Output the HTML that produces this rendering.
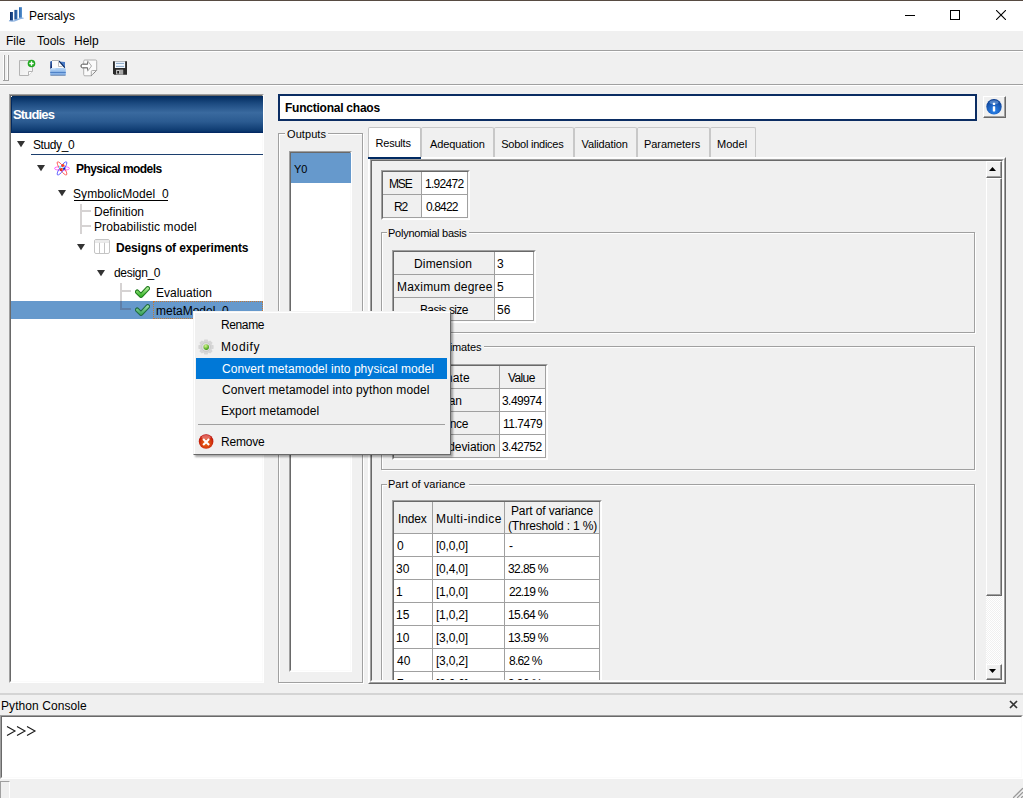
<!DOCTYPE html>
<html><head><meta charset="utf-8">
<style>
*{margin:0;padding:0;box-sizing:border-box}
html,body{width:1023px;height:798px;overflow:hidden;background:#f0f0f0}
body{position:relative;font:12px/14px "Liberation Sans",sans-serif;color:#000}
.a{position:absolute}
.t{position:absolute;white-space:nowrap;line-height:14px;font-family:"Liberation Sans",sans-serif}
</style></head><body>
<div class="a" style="left:0px;top:0px;width:1023px;height:1px;background:#574b42"></div>
<div class="a" style="left:0px;top:1px;width:1023px;height:30px;background:#fff"></div>
<svg class="a" style="left:8px;top:7px" width="16" height="16" viewBox="0 0 16 16"><defs><linearGradient id="b1" x1="0" y1="0" x2="1" y2="0"><stop offset="0" stop-color="#0a2a66"/><stop offset="1" stop-color="#2a5a9a"/></linearGradient>
 <linearGradient id="b2" x1="0" y1="0" x2="1" y2="0"><stop offset="0" stop-color="#1a4a8e"/><stop offset="1" stop-color="#3a72b4"/></linearGradient>
 <linearGradient id="b3" x1="0" y1="0" x2="1" y2="0"><stop offset="0" stop-color="#2a66ac"/><stop offset="1" stop-color="#5a94d0"/></linearGradient></defs>
 <rect x="2" y="5" width="3" height="8.7" fill="url(#b1)"/><rect x="6.4" y="2.9" width="3" height="9.7" fill="url(#b2)"/><rect x="11" y="0.2" width="3" height="10.6" fill="url(#b3)"/>
 <path d="M1 13.6Q5 14.8 9 12.8T15.5 11.3" fill="none" stroke="#7aa6dc" stroke-width="1.3" opacity="0.85"/></svg>
<div class="t" style="left:29.00px;top:9px;font-size:12px">Persalys</div>
<div class="a" style="left:905px;top:15px;width:10px;height:1px;background:#000"></div>
<div class="a" style="left:950px;top:10px;width:10px;height:10px;border:1px solid #000"></div>
<svg class="a" style="left:996px;top:10px" width="10" height="10" viewBox="0 0 10 10"><path d="M0 0L10 10M10 0L0 10" stroke="#000" stroke-width="1.1"/></svg>
<div class="t" style="left:6.00px;top:34px;font-size:12px">File</div>
<div class="t" style="left:37.00px;top:34px;font-size:12px">Tools</div>
<div class="t" style="left:74.00px;top:34px;font-size:12px">Help</div>
<div class="a" style="left:0px;top:50px;width:1023px;height:1px;background:#a0a0a0"></div>
<div class="a" style="left:0px;top:51px;width:1023px;height:1px;background:#fff"></div>
<div class="a" style="left:3px;top:55px;width:1px;height:26px;background:#fff"></div>
<div class="a" style="left:4px;top:55px;width:1px;height:26px;background:#a0a0a0"></div>
<div class="a" style="left:7px;top:55px;width:1px;height:26px;background:#fff"></div>
<div class="a" style="left:8px;top:55px;width:1px;height:26px;background:#a0a0a0"></div>
<div class="a" style="left:3px;top:80px;width:6px;height:1px;background:#a0a0a0"></div>
<svg class="a" style="left:18px;top:59px" width="18" height="18" viewBox="0 0 18 18"><defs><linearGradient id="pg" x1="0" y1="0" x2="1" y2="1"><stop offset="0" stop-color="#e8e8e8"/><stop offset="1" stop-color="#fafafa"/></linearGradient></defs>
 <path d="M1.5 1.5H14.5V12.5L10.5 16.5H1.5Z" fill="url(#pg)" stroke="#b4b4b4"/>
 <path d="M10.5 16.5V12.5H14.5" fill="#fff" stroke="#b4b4b4"/>
 <circle cx="13.5" cy="4.5" r="3.8" fill="#1fa81f"/>
 <path d="M13.5 2.3V6.7M11.3 4.5H15.7" stroke="#fff" stroke-width="1.4"/></svg>
<svg class="a" style="left:50px;top:60px" width="16" height="16" viewBox="0 0 16 16"><defs><linearGradient id="tray" x1="0" y1="0" x2="0" y2="1"><stop offset="0" stop-color="#b4d4f6"/><stop offset="1" stop-color="#7aa8e2"/></linearGradient>
 <linearGradient id="back" x1="0" y1="0" x2="0" y2="1"><stop offset="0" stop-color="#3a6cb8"/><stop offset="1" stop-color="#0a2060"/></linearGradient></defs>
 <path d="M0.2 2.2Q0.2 1 1.4 1H2.2V9H0.2Z" fill="url(#back)"/>
 <path d="M2 0.5H8.8L15 7V9H2Z" fill="#fcfcfc"/>
 <path d="M2 0.5H8.8" stroke="#a8a8a8" stroke-width="0.9"/>
 <path d="M9 1.4L15 2V8.2Z" fill="#4a7cc8"/>
 <path d="M8.9 0.9L14.8 7.6" stroke="#0a2a60" stroke-width="1.1"/>
 <path d="M8.5 2V6.5H12.5" fill="none" stroke="#b8b8b8" stroke-width="0.9"/>
 <rect x="0.2" y="8" width="15.6" height="7.6" rx="1.2" fill="url(#tray)"/>
 <path d="M0.5 15.3H15.5" stroke="#6a84a8" stroke-width="0.8"/>
 <path d="M0.2 12.4H15.8" stroke="#3f74c0" stroke-width="0.9"/>
 <path d="M1.5 8.8H5.5" stroke="#d8ecff" stroke-width="0.9"/></svg>
<svg class="a" style="left:80px;top:59px" width="18" height="18" viewBox="0 0 18 18"><path d="M3.7 2.2Q3.7 1 4.9 1H15.5Q16.7 1 16.7 2.2V11.3L11.3 16.8H4.9Q3.7 16.8 3.7 15.6Z" fill="#fbfbfb" stroke="#a8a8a8" stroke-width="0.9"/>
 <path d="M11.3 16.8V12.5Q11.3 11.5 12.3 11.5H16.7" fill="#f4f4f4" stroke="#a0a0a0" stroke-width="0.9"/>
 <path d="M11.6 16.4L16.4 11.6" stroke="#505050" stroke-width="0.9" stroke-dasharray="1 0.8"/>
 <path d="M2.5 5.2H7.6V1.8L11.5 7L7.6 12.2V8.8H2.5Q1 8.8 1 7Q1 5.2 2.5 5.2Z" fill="#fff" stroke="#a0a0a0" stroke-width="0.9"/>
 <path d="M2.5 5.2H7.6V3.2M7.6 10.8V8.8H2.5Q1 8.8 1 7Q1 5.2 2.5 5.2" fill="none" stroke="#707070" stroke-width="1"/></svg>
<svg class="a" style="left:112px;top:60px" width="16" height="16" viewBox="0 0 16 16"><path d="M1 1.2H15V14.8H2.2L1 13.6Z" fill="#2a2a2a"/>
 <rect x="2.9" y="1.4" width="10.2" height="6.6" fill="#f2f8ff"/>
 <path d="M4 3.4H12.1M4 6.4H12.1" stroke="#7a9cc0" stroke-width="0.9"/>
 <rect x="4.1" y="9.8" width="7" height="4.6" fill="#c8c8c8"/>
 <rect x="7.6" y="9.8" width="3.5" height="4.6" fill="#a8a8a8"/>
 <rect x="5.2" y="11" width="1.8" height="2.6" fill="#202020"/></svg>
<div class="a" style="left:0px;top:84px;width:1023px;height:1px;background:#a0a0a0"></div>
<div class="a" style="left:0px;top:85px;width:1023px;height:1px;background:#fff"></div>
<div class="a" style="left:9px;top:94px;width:255px;height:589px;background:#fff;border-top:1px solid #a0a0a0;border-left:1px solid #a0a0a0;border-right:1px solid #fff;border-bottom:1px solid #fff"></div>
<div class="a" style="left:10px;top:95px;width:253px;height:587px;border-top:1px solid #696969;border-left:1px solid #696969;border-right:1px solid #fbfbfb;border-bottom:1px solid #fbfbfb"></div>
<div class="a" style="left:11px;top:96px;width:252px;height:37px;background:linear-gradient(#002a5e 0%,#1c4a80 20%,#3a6a9f 45%,#2a5a90 70%,#0d3a70 94%,#002560 100%)"></div>
<div class="a" style="left:11px;top:96px;width:1px;height:37px;background:#002a62"></div>
<div class="a" style="left:11px;top:96px;width:1px;height:1px;background:#fff"></div>
<div class="t" style="left:13.00px;top:108px;font-size:13px;font-weight:700;letter-spacing:-0.83px;color:#fff">Studies</div>
<svg class="a" style="left:17px;top:141px" width="8" height="7" viewBox="0 0 8 7"><path d="M0 0H8L4 6.2Z" fill="#333"/></svg>
<div class="t" style="left:33.00px;top:138px;font-size:12px;letter-spacing:-0.40px">Study_0</div>
<div class="a" style="left:31px;top:154px;width:232px;height:1px;background:#1c3f6e"></div>
<svg class="a" style="left:37px;top:165px" width="8" height="7" viewBox="0 0 8 7"><path d="M0 0H8L4 6.2Z" fill="#333"/></svg>
<svg class="a" style="left:54px;top:160px" width="16" height="17" viewBox="0 0 16 17"><g fill="none" stroke-width="0.9">
 <ellipse cx="8" cy="8.4" rx="7.6" ry="1.9" stroke="#ff50ff"/>
 <ellipse cx="8" cy="8.4" rx="7.9" ry="2.1" stroke="#ff5a5a" transform="rotate(55 8 8.4)"/>
 <ellipse cx="8" cy="8.4" rx="7.9" ry="2.1" stroke="#6060ff" transform="rotate(-55 8 8.4)"/></g>
 <circle cx="9" cy="5.5" r="1.5" fill="#ff4010"/>
 <circle cx="6" cy="7" r="1.2" fill="#80f0ff"/>
 <circle cx="10" cy="8.4" r="1.4" fill="#1010d0"/>
 <circle cx="9.6" cy="7.3" r="0.9" fill="#80f0ff"/>
 <circle cx="7.2" cy="9.5" r="1.5" fill="#e02020"/>
 <circle cx="8.3" cy="9.3" r="0.9" fill="#ff9010"/></svg>
<div class="t" style="left:76.00px;top:162px;font-size:12px;font-weight:700;letter-spacing:-0.57px">Physical models</div>
<svg class="a" style="left:58px;top:190px" width="8" height="7" viewBox="0 0 8 7"><path d="M0 0H8L4 6.2Z" fill="#333"/></svg>
<div class="t" style="left:73.00px;top:187px;font-size:12px;letter-spacing:0.07px">SymbolicModel_0</div>
<div class="a" style="left:74px;top:200px;width:94px;height:1px;background:#000"></div>
<div class="a" style="left:80px;top:204px;width:2px;height:30px;background:#d6d3d3"></div>
<div class="a" style="left:82px;top:210px;width:9px;height:2px;background:#d6d3d3"></div>
<div class="a" style="left:82px;top:225px;width:9px;height:2px;background:#d6d3d3"></div>
<div class="t" style="left:94.00px;top:205px;font-size:12px">Definition</div>
<div class="t" style="left:94.00px;top:220px;font-size:12px;letter-spacing:0.11px">Probabilistic model</div>
<svg class="a" style="left:77px;top:244px" width="8" height="7" viewBox="0 0 8 7"><path d="M0 0H8L4 6.2Z" fill="#333"/></svg>
<svg class="a" style="left:94px;top:239px" width="16" height="15" viewBox="0 0 16 15"><rect x="0.5" y="0.5" width="15" height="14" rx="1.5" fill="#fff" stroke="#c4c4c4"/>
 <rect x="1" y="1" width="14" height="2.8" fill="#e4e4e4"/><rect x="1" y="1.6" width="14" height="1" fill="#f4f4f4"/>
 <path d="M5.5 3.8V14.5M10.5 3.8V14.5" stroke="#c4c4c4" stroke-width="1"/></svg>
<div class="t" style="left:116.00px;top:241px;font-size:12px;font-weight:700;letter-spacing:-0.14px">Designs of experiments</div>
<svg class="a" style="left:97px;top:270px" width="8" height="7" viewBox="0 0 8 7"><path d="M0 0H8L4 6.2Z" fill="#333"/></svg>
<div class="t" style="left:114.00px;top:266px;font-size:12px;letter-spacing:-0.31px">design_0</div>
<div class="a" style="left:11px;top:301px;width:252px;height:18px;background:#6699cc"></div>
<div class="a" style="left:120px;top:283px;width:2px;height:18px;background:#d6d3d3"></div>
<div class="a" style="left:120px;top:301px;width:2px;height:9px;background:#5f7fa8"></div>
<div class="a" style="left:122px;top:290px;width:9px;height:2px;background:#d6d3d3"></div>
<div class="a" style="left:122px;top:308px;width:9px;height:2px;background:#5f7fa8"></div>
<svg class="a" style="left:135px;top:286px" width="15" height="12" viewBox="0 0 15 12"><defs><linearGradient id="cg1" x1="0" y1="0" x2="0" y2="1"><stop offset="0" stop-color="#a8e890"/><stop offset="1" stop-color="#3cb82c"/></linearGradient></defs>
 <path d="M2.2 5.8L6 9.6L12.8 2.4" fill="none" stroke="#1f7a1f" stroke-width="4.6" stroke-linejoin="round" stroke-linecap="round"/>
 <path d="M2.2 5.8L6 9.6L12.8 2.4" fill="none" stroke="url(#cg1)" stroke-width="2.6" stroke-linejoin="round" stroke-linecap="round"/></svg>
<div class="t" style="left:156.00px;top:286px;font-size:12px">Evaluation</div>
<svg class="a" style="left:135px;top:304px" width="15" height="12" viewBox="0 0 15 12"><defs><linearGradient id="cg2" x1="0" y1="0" x2="0" y2="1"><stop offset="0" stop-color="#90d8a0"/><stop offset="1" stop-color="#40a860"/></linearGradient></defs>
 <path d="M2.2 5.8L6 9.6L12.8 2.4" fill="none" stroke="#1f6a40" stroke-width="4.6" stroke-linejoin="round" stroke-linecap="round"/>
 <path d="M2.2 5.8L6 9.6L12.8 2.4" fill="none" stroke="url(#cg2)" stroke-width="2.6" stroke-linejoin="round" stroke-linecap="round"/></svg>
<div class="a" style="left:153px;top:301px;width:110px;height:18px;border:1px dotted #c07838"></div>
<div class="t" style="left:156.00px;top:304px;font-size:12px">metaModel_0</div>
<div class="a" style="left:278px;top:94px;width:699px;height:27px;background:#fff;border:2px solid #0b2d63"></div>
<div class="t" style="left:285.00px;top:101px;font-size:12px;font-weight:700;letter-spacing:-0.24px">Functional chaos</div>
<div class="a" style="left:983px;top:96px;width:23px;height:22px;background:#f0f0f0;border-top:1px solid #fff;border-left:1px solid #fff;border-right:1px solid #696969;border-bottom:1px solid #696969;box-shadow:inset -1px -1px 0 #a0a0a0"></div>
<svg class="a" style="left:986px;top:99px" width="16" height="16" viewBox="0 0 16 16"><defs><radialGradient id="ig" cx="0.5" cy="0.75" r="0.75"><stop offset="0" stop-color="#2a86f0"/><stop offset="0.6" stop-color="#1a5cb8"/><stop offset="1" stop-color="#08388a"/></radialGradient></defs>
 <circle cx="8" cy="7.8" r="7.7" fill="url(#ig)"/>
 <ellipse cx="8" cy="3.2" rx="4.5" ry="2" fill="#9cc4f0" opacity="0.45"/>
 <rect x="6.8" y="3.8" width="2.4" height="2.1" rx="0.6" fill="#fff"/>
 <rect x="6.8" y="7.3" width="2.4" height="5.2" rx="0.4" fill="#fff"/></svg>
<div class="a" style="left:279px;top:134px;width:85px;height:550px;border:1px solid #fff"></div>
<div class="a" style="left:278px;top:133px;width:85px;height:550px;border:1px solid #a0a0a0"></div>
<div class="a" style="left:285px;top:127px;width:43px;height:13px;background:#f0f0f0"></div>
<div class="t" style="left:287.00px;top:127px;font-size:11px;letter-spacing:0.08px">Outputs</div>
<div class="a" style="left:289px;top:151px;width:63px;height:521px;background:#fff;border-top:1px solid #a0a0a0;border-left:1px solid #a0a0a0;border-right:1px solid #fff;border-bottom:1px solid #fff"></div>
<div class="a" style="left:290px;top:152px;width:61px;height:519px;border-top:1px solid #696969;border-left:1px solid #696969;border-right:1px solid #fbfbfb;border-bottom:1px solid #fbfbfb"></div>
<div class="a" style="left:291px;top:153px;width:60px;height:30px;background:#6699cc"></div>
<div class="t" style="left:294.00px;top:162px;font-size:11px">Y0</div>
<div class="a" style="left:368px;top:127px;width:53px;height:31px;background:#fff;border:1px solid #c4c4c4;border-bottom:none;border-radius:2px 2px 0 0"></div>
<div class="a" style="left:368px;top:157px;width:53px;height:2px;background:#002a62"></div>
<div class="t" style="left:375.60px;top:136px;font-size:11px;letter-spacing:-0.23px">Results</div>
<div class="a" style="left:421px;top:127px;width:73px;height:30px;background:#f0f0f0;border:1px solid #c8c8c8;border-bottom:none;border-radius:2px 2px 0 0"></div>
<div class="t" style="left:430.00px;top:137px;font-size:11px;letter-spacing:-0.10px">Adequation</div>
<div class="a" style="left:494px;top:127px;width:80px;height:30px;background:#f0f0f0;border:1px solid #c8c8c8;border-bottom:none;border-radius:2px 2px 0 0"></div>
<div class="t" style="left:501.20px;top:137px;font-size:11px;letter-spacing:-0.24px">Sobol indices</div>
<div class="a" style="left:574px;top:127px;width:63px;height:30px;background:#f0f0f0;border:1px solid #c8c8c8;border-bottom:none;border-radius:2px 2px 0 0"></div>
<div class="t" style="left:581.50px;top:137px;font-size:11px;letter-spacing:-0.12px">Validation</div>
<div class="a" style="left:637px;top:127px;width:73px;height:30px;background:#f0f0f0;border:1px solid #c8c8c8;border-bottom:none;border-radius:2px 2px 0 0"></div>
<div class="t" style="left:644.00px;top:137px;font-size:11px;letter-spacing:-0.07px">Parameters</div>
<div class="a" style="left:710px;top:127px;width:46px;height:30px;background:#f0f0f0;border:1px solid #c8c8c8;border-bottom:none;border-radius:2px 2px 0 0"></div>
<div class="t" style="left:717.00px;top:137px;font-size:11px;letter-spacing:0.03px">Model</div>
<div class="a" style="left:421px;top:157px;width:585px;height:1px;background:#fff"></div>
<div class="a" style="left:421px;top:158px;width:585px;height:1px;background:#fbfbfb"></div>
<div class="a" style="left:368px;top:157px;width:638px;height:527px;border-top:1px solid #fff;border-left:1px solid #fff;border-right:1px solid #696969;border-bottom:1px solid #696969"></div>
<div class="a" style="left:369px;top:158px;width:636px;height:525px;border-top:1px solid #fbfbfb;border-left:1px solid #fbfbfb;border-right:1px solid #a0a0a0;border-bottom:1px solid #a0a0a0"></div>
<div class="a" style="left:368px;top:157px;width:53px;height:2px;background:#002a62"></div>
<div class="a" style="left:370px;top:159px;width:634px;height:523px;border-top:1px solid #a0a0a0;border-left:1px solid #a0a0a0;border-right:1px solid #fff;border-bottom:1px solid #fff"></div>
<div class="a" style="left:371px;top:160px;width:632px;height:521px;border-top:1px solid #696969;border-left:1px solid #696969;border-right:1px solid #fbfbfb;border-bottom:1px solid #fbfbfb"></div>
<div class="a" style="left:372px;top:161px;width:614px;height:519px;overflow:hidden">
<div class="a" style="left:9px;top:9px;width:89px;height:50px;background:#a0a0a0;border-top:1px solid #a0a0a0;border-left:1px solid #a0a0a0;border-right:1px solid #fff;border-bottom:1px solid #fff"></div>
<div class="a" style="left:10px;top:10px;width:87px;height:48px;background:#a0a0a0;border-top:1px solid #696969;border-left:1px solid #696969;border-right:1px solid #fbfbfb;border-bottom:1px solid #fbfbfb"></div>
<div class="a" style="left:11px;top:11px;width:38px;height:22px;background:#f0f0f0"></div>
<div class="a" style="left:11px;top:34px;width:38px;height:22px;background:#f0f0f0"></div>
<div class="a" style="left:50px;top:11px;width:45px;height:22px;background:#fff"></div>
<div class="a" style="left:50px;top:34px;width:45px;height:22px;background:#fff"></div>
<div class="t" style="left:17.00px;top:16px;font-size:12px;letter-spacing:-1.15px">MSE</div>
<div class="t" style="left:22.00px;top:39px;font-size:12px;letter-spacing:-1.10px">R2</div>
<div class="t" style="left:53.00px;top:16px;font-size:12px;letter-spacing:-0.70px">1.92472</div>
<div class="t" style="left:54.00px;top:39px;font-size:12px;letter-spacing:-0.86px">0.8422</div>
<div class="a" style="left:10px;top:72px;width:594px;height:101px;border:1px solid #fff"></div>
<div class="a" style="left:9px;top:71px;width:594px;height:101px;border:1px solid #a0a0a0"></div>
<div class="a" style="left:15px;top:65px;width:82px;height:13px;background:#f0f0f0"></div>
<div class="t" style="left:16.00px;top:65px;font-size:11px;letter-spacing:-0.25px">Polynomial basis</div>
<div class="a" style="left:20px;top:89px;width:144px;height:73px;background:#a0a0a0;border-top:1px solid #a0a0a0;border-left:1px solid #a0a0a0;border-right:1px solid #fff;border-bottom:1px solid #fff"></div>
<div class="a" style="left:21px;top:90px;width:142px;height:71px;background:#a0a0a0;border-top:1px solid #696969;border-left:1px solid #696969;border-right:1px solid #fbfbfb;border-bottom:1px solid #fbfbfb"></div>
<div class="a" style="left:22px;top:91px;width:100px;height:22px;background:#f0f0f0"></div>
<div class="a" style="left:22px;top:114px;width:100px;height:22px;background:#f0f0f0"></div>
<div class="a" style="left:22px;top:137px;width:100px;height:22px;background:#f0f0f0"></div>
<div class="a" style="left:123px;top:91px;width:38px;height:22px;background:#fff"></div>
<div class="a" style="left:123px;top:114px;width:38px;height:22px;background:#fff"></div>
<div class="a" style="left:123px;top:137px;width:38px;height:22px;background:#fff"></div>
<div class="t" style="left:42.00px;top:96px;font-size:12px;letter-spacing:0.15px">Dimension</div>
<div class="t" style="left:25.00px;top:119px;font-size:12px;letter-spacing:0.20px">Maximum degree</div>
<div class="t" style="left:48.00px;top:142px;font-size:12px;letter-spacing:-0.63px">Basis size</div>
<div class="t" style="left:125.00px;top:96px;font-size:12px">3</div>
<div class="t" style="left:125.00px;top:119px;font-size:12px">5</div>
<div class="t" style="left:125.00px;top:142px;font-size:12px">56</div>
<div class="a" style="left:10px;top:186px;width:594px;height:124px;border:1px solid #fff"></div>
<div class="a" style="left:9px;top:185px;width:594px;height:124px;border:1px solid #a0a0a0"></div>
<div class="a" style="left:15px;top:179px;width:97px;height:13px;background:#f0f0f0"></div>
<div class="t" style="left:16.00px;top:179px;font-size:11px;letter-spacing:-0.12px">Moments estimates</div>
<div class="a" style="left:20px;top:203px;width:156px;height:96px;background:#a0a0a0;border-top:1px solid #a0a0a0;border-left:1px solid #a0a0a0;border-right:1px solid #fff;border-bottom:1px solid #fff"></div>
<div class="a" style="left:21px;top:204px;width:154px;height:94px;background:#a0a0a0;border-top:1px solid #696969;border-left:1px solid #696969;border-right:1px solid #fbfbfb;border-bottom:1px solid #fbfbfb"></div>
<div class="a" style="left:22px;top:205px;width:105px;height:22px;background:#f0f0f0"></div>
<div class="a" style="left:22px;top:228px;width:105px;height:22px;background:#f0f0f0"></div>
<div class="a" style="left:22px;top:251px;width:105px;height:22px;background:#f0f0f0"></div>
<div class="a" style="left:22px;top:274px;width:105px;height:22px;background:#f0f0f0"></div>
<div class="a" style="left:128px;top:205px;width:45px;height:22px;background:#f0f0f0"></div>
<div class="a" style="left:128px;top:228px;width:45px;height:22px;background:#fff"></div>
<div class="a" style="left:128px;top:251px;width:45px;height:22px;background:#fff"></div>
<div class="a" style="left:128px;top:274px;width:45px;height:22px;background:#fff"></div>
<div class="t" style="left:50.00px;top:210px;font-size:12px;letter-spacing:0.14px">Estimate</div>
<div class="t" style="left:136.00px;top:210px;font-size:12px;letter-spacing:-0.62px">Value</div>
<div class="t" style="left:60.00px;top:233px;font-size:12px">Mean</div>
<div class="t" style="left:52.00px;top:256px;font-size:12px;letter-spacing:-0.29px">Variance</div>
<div class="t" style="left:25.00px;top:279px;font-size:12px;letter-spacing:-0.09px">Standard deviation</div>
<div class="t" style="left:130.00px;top:233px;font-size:12px;letter-spacing:-0.55px">3.49974</div>
<div class="t" style="left:131.00px;top:256px;font-size:12px;letter-spacing:-0.48px">11.7479</div>
<div class="t" style="left:130.00px;top:279px;font-size:12px;letter-spacing:-0.55px">3.42752</div>
<div class="a" style="left:10px;top:324px;width:594px;height:317px;border:1px solid #fff"></div>
<div class="a" style="left:9px;top:323px;width:594px;height:317px;border:1px solid #a0a0a0"></div>
<div class="a" style="left:15px;top:317px;width:82px;height:13px;background:#f0f0f0"></div>
<div class="t" style="left:16.00px;top:316px;font-size:11px;letter-spacing:0.03px">Part of variance</div>
<div class="a" style="left:20px;top:339px;width:210px;height:197px;background:#a0a0a0;border-top:1px solid #a0a0a0;border-left:1px solid #a0a0a0;border-right:1px solid #fff;border-bottom:1px solid #fff"></div>
<div class="a" style="left:21px;top:340px;width:208px;height:195px;background:#a0a0a0;border-top:1px solid #696969;border-left:1px solid #696969;border-right:1px solid #fbfbfb;border-bottom:1px solid #fbfbfb"></div>
<div class="a" style="left:22px;top:341px;width:38px;height:31px;background:#f0f0f0"></div>
<div class="a" style="left:22px;top:373px;width:38px;height:22px;background:#fff"></div>
<div class="a" style="left:22px;top:396px;width:38px;height:22px;background:#fff"></div>
<div class="a" style="left:22px;top:419px;width:38px;height:22px;background:#fff"></div>
<div class="a" style="left:22px;top:442px;width:38px;height:22px;background:#fff"></div>
<div class="a" style="left:22px;top:465px;width:38px;height:22px;background:#fff"></div>
<div class="a" style="left:22px;top:488px;width:38px;height:22px;background:#fff"></div>
<div class="a" style="left:22px;top:511px;width:38px;height:22px;background:#fff"></div>
<div class="a" style="left:61px;top:341px;width:71px;height:31px;background:#f0f0f0"></div>
<div class="a" style="left:61px;top:373px;width:71px;height:22px;background:#fff"></div>
<div class="a" style="left:61px;top:396px;width:71px;height:22px;background:#fff"></div>
<div class="a" style="left:61px;top:419px;width:71px;height:22px;background:#fff"></div>
<div class="a" style="left:61px;top:442px;width:71px;height:22px;background:#fff"></div>
<div class="a" style="left:61px;top:465px;width:71px;height:22px;background:#fff"></div>
<div class="a" style="left:61px;top:488px;width:71px;height:22px;background:#fff"></div>
<div class="a" style="left:61px;top:511px;width:71px;height:22px;background:#fff"></div>
<div class="a" style="left:133px;top:341px;width:94px;height:31px;background:#f0f0f0"></div>
<div class="a" style="left:133px;top:373px;width:94px;height:22px;background:#fff"></div>
<div class="a" style="left:133px;top:396px;width:94px;height:22px;background:#fff"></div>
<div class="a" style="left:133px;top:419px;width:94px;height:22px;background:#fff"></div>
<div class="a" style="left:133px;top:442px;width:94px;height:22px;background:#fff"></div>
<div class="a" style="left:133px;top:465px;width:94px;height:22px;background:#fff"></div>
<div class="a" style="left:133px;top:488px;width:94px;height:22px;background:#fff"></div>
<div class="a" style="left:133px;top:511px;width:94px;height:22px;background:#fff"></div>
<div class="t" style="left:26.00px;top:351px;font-size:12px;letter-spacing:-0.17px">Index</div>
<div class="t" style="left:64.00px;top:351px;font-size:12px;letter-spacing:0.42px">Multi-indice</div>
<div class="t" style="left:139.00px;top:343px;font-size:12px;letter-spacing:-0.13px">Part of variance</div>
<div class="t" style="left:136.00px;top:358px;font-size:12px;letter-spacing:-0.18px">(Threshold : 1 %)</div>
<div class="t" style="left:25.00px;top:378px;font-size:12px">0</div>
<div class="t" style="left:64.00px;top:378px;font-size:12px;letter-spacing:-0.22px">[0,0,0]</div>
<div class="t" style="left:137.00px;top:378px;font-size:12px">-</div>
<div class="t" style="left:24.00px;top:401px;font-size:12px">30</div>
<div class="t" style="left:64.00px;top:401px;font-size:12px;letter-spacing:-0.22px">[0,4,0]</div>
<div class="t" style="left:136.00px;top:401px;font-size:12px;letter-spacing:-0.60px">32.85 %</div>
<div class="t" style="left:24.00px;top:424px;font-size:12px">1</div>
<div class="t" style="left:64.00px;top:424px;font-size:12px;letter-spacing:-0.22px">[1,0,0]</div>
<div class="t" style="left:137.00px;top:424px;font-size:12px;letter-spacing:-0.77px">22.19 %</div>
<div class="t" style="left:24.00px;top:447px;font-size:12px">15</div>
<div class="t" style="left:64.00px;top:447px;font-size:12px;letter-spacing:-0.22px">[1,0,2]</div>
<div class="t" style="left:136.00px;top:447px;font-size:12px;letter-spacing:-0.60px">15.64 %</div>
<div class="t" style="left:24.00px;top:470px;font-size:12px">10</div>
<div class="t" style="left:64.00px;top:470px;font-size:12px;letter-spacing:-0.22px">[3,0,0]</div>
<div class="t" style="left:136.00px;top:470px;font-size:12px;letter-spacing:-0.60px">13.59 %</div>
<div class="t" style="left:25.00px;top:493px;font-size:12px">40</div>
<div class="t" style="left:64.00px;top:493px;font-size:12px;letter-spacing:-0.22px">[3,0,2]</div>
<div class="t" style="left:137.00px;top:493px;font-size:12px;letter-spacing:-0.78px">8.62 %</div>
<div class="t" style="left:25.00px;top:516px;font-size:12px">7</div>
<div class="t" style="left:64.00px;top:516px;font-size:12px;letter-spacing:-0.22px">[2,0,0]</div>
<div class="t" style="left:136.00px;top:516px;font-size:12px;letter-spacing:-0.58px">3.30 %</div>
</div>
<div class="a" style="left:986px;top:161px;width:16px;height:519px;background:#f0f0f0"></div>
<div class="a" style="left:986px;top:161px;width:16px;height:17px;background:#f0f0f0;border-top:1px solid #fff;border-left:1px solid #fff;border-right:1px solid #696969;border-bottom:1px solid #696969;box-shadow:inset -1px -1px 0 #a0a0a0"></div>
<svg class="a" style="left:989px;top:167px" width="7" height="4" viewBox="0 0 7 4"><path d="M0 4H7L3.5 0Z" fill="#000"/></svg>
<div class="a" style="left:986px;top:178px;width:16px;height:418px;background:#f0f0f0;border-top:1px solid #fff;border-left:1px solid #fff;border-right:1px solid #696969;border-bottom:1px solid #696969;box-shadow:inset -1px -1px 0 #a0a0a0"></div>
<div class="a" style="left:986px;top:596px;width:16px;height:68px;background:repeating-conic-gradient(#fff 0 25%,#f0f0f0 0 50%) 0 0/2px 2px"></div>
<div class="a" style="left:986px;top:664px;width:16px;height:16px;background:#f0f0f0;border-top:1px solid #fff;border-left:1px solid #fff;border-right:1px solid #696969;border-bottom:1px solid #696969;box-shadow:inset -1px -1px 0 #a0a0a0"></div>
<svg class="a" style="left:989px;top:669px" width="7" height="4" viewBox="0 0 7 4"><path d="M0 0H7L3.5 4Z" fill="#000"/></svg>
<div class="a" style="left:0px;top:693px;width:1023px;height:2px;background:#d4d4d4"></div>
<div class="t" style="left:1.00px;top:699px;font-size:12px;letter-spacing:0.08px">Python Console</div>
<svg class="a" style="left:1009px;top:700px" width="9" height="9" viewBox="0 0 9 9"><path d="M1 1L8 8M8 1L1 8" stroke="#333" stroke-width="1.7"/></svg>
<div class="a" style="left:0px;top:715px;width:1023px;height:64px;background:#fff;border-top:1px solid #a0a0a0;border-left:1px solid #a0a0a0;border-right:1px solid #fff;border-bottom:1px solid #fff"></div>
<div class="a" style="left:1px;top:716px;width:1021px;height:62px;border-top:1px solid #696969;border-left:1px solid #696969;border-right:1px solid #fbfbfb;border-bottom:1px solid #fbfbfb"></div>
<svg class="a" style="left:5px;top:725px" width="32" height="11" viewBox="0 0 32 11"><path d="M2 1.5L10 6L2 10.5M12 1.5L20 6L12 10.5M22 1.5L30 6L22 10.5" fill="none" stroke="#1a1a1a" stroke-width="1.1"/></svg>
<div class="a" style="left:0px;top:781px;width:10px;height:17px;border-top:1px solid #a0a0a0;border-left:1px solid #a0a0a0;border-right:1px solid #fff"></div>
<svg class="a" style="left:1003px;top:778px" width="20" height="20" viewBox="0 0 20 20"><path d="M9 20L20 9M13 20L20 13M17 20L20 17" stroke="#fff" stroke-width="1"/><path d="M10 20L20 10M14 20L20 14M18 20L20 18" stroke="#9a9a9a" stroke-width="1.3"/></svg>
<div class="a" style="left:193px;top:311px;width:258px;height:144px;background:#f0f0f0;border-top:1px solid #f4f4f4;border-left:1px solid #f4f4f4;border-right:1px solid #696969;border-bottom:1px solid #696969;box-shadow:2px 2px 2px rgba(0,0,0,0.35)"></div>
<div class="a" style="left:194px;top:312px;width:256px;height:142px;border-top:1px solid #fff;border-left:1px solid #fff"></div>
<div class="a" style="left:196px;top:358px;width:251px;height:21px;background:#0078d7"></div>
<div class="t" style="left:221.00px;top:318px;font-size:12px;letter-spacing:-0.38px">Rename</div>
<svg class="a" style="left:198px;top:339px" width="16" height="16" viewBox="0 0 16 16"><defs><radialGradient id="gb" cx="0.4" cy="0.3" r="0.7"><stop offset="0" stop-color="#d8f890"/><stop offset="1" stop-color="#3a9a10"/></radialGradient></defs>
 <path d="M15.61 6.30 L15.61 9.70 L13.43 10.30 L13.47 10.22 L14.59 12.18 L12.18 14.59 L10.22 13.47 L10.30 13.43 L9.70 15.61 L6.30 15.61 L5.70 13.43 L5.78 13.47 L3.82 14.59 L1.41 12.18 L2.53 10.22 L2.57 10.30 L0.39 9.70 L0.39 6.30 L2.57 5.70 L2.53 5.78 L1.41 3.82 L3.82 1.41 L5.78 2.53 L5.70 2.57 L6.30 0.39 L9.70 0.39 L10.30 2.57 L10.22 2.53 L12.18 1.41 L14.59 3.82 L13.47 5.78 L13.43 5.70Z" fill="#d6d6d6"/>
 <circle cx="8" cy="8" r="4.3" fill="#e4e4e4" stroke="#c4c4c4" stroke-width="0.8"/>
 <circle cx="8.2" cy="8.1" r="2.8" fill="url(#gb)"/></svg>
<div class="t" style="left:221.00px;top:340px;font-size:12px;letter-spacing:0.62px">Modify</div>
<div class="t" style="left:222.00px;top:362px;font-size:12px;letter-spacing:0.05px;color:#fff">Convert metamodel into physical model</div>
<div class="t" style="left:222.00px;top:383px;font-size:12px;letter-spacing:0.14px">Convert metamodel into python model</div>
<div class="t" style="left:221.00px;top:404px;font-size:12px;letter-spacing:0.05px">Export metamodel</div>
<div class="a" style="left:198px;top:424px;width:247px;height:1px;background:#a0a0a0"></div>
<svg class="a" style="left:198px;top:433px" width="16" height="16" viewBox="0 0 16 16"><defs><radialGradient id="rg" cx="0.5" cy="0.6" r="0.6"><stop offset="0" stop-color="#f07010"/><stop offset="0.55" stop-color="#d84010"/><stop offset="1" stop-color="#b80808"/></radialGradient></defs>
 <circle cx="8.1" cy="8.5" r="7.3" fill="url(#rg)"/>
 <ellipse cx="8.1" cy="4.3" rx="4.5" ry="2.2" fill="#f09090" opacity="0.6"/>
 <path d="M5.1 6L11.1 12M11.1 6L5.1 12" stroke="#fff" stroke-width="2.1"/></svg>
<div class="t" style="left:221.00px;top:435px;font-size:12px;letter-spacing:-0.18px">Remove</div>
</body></html>
